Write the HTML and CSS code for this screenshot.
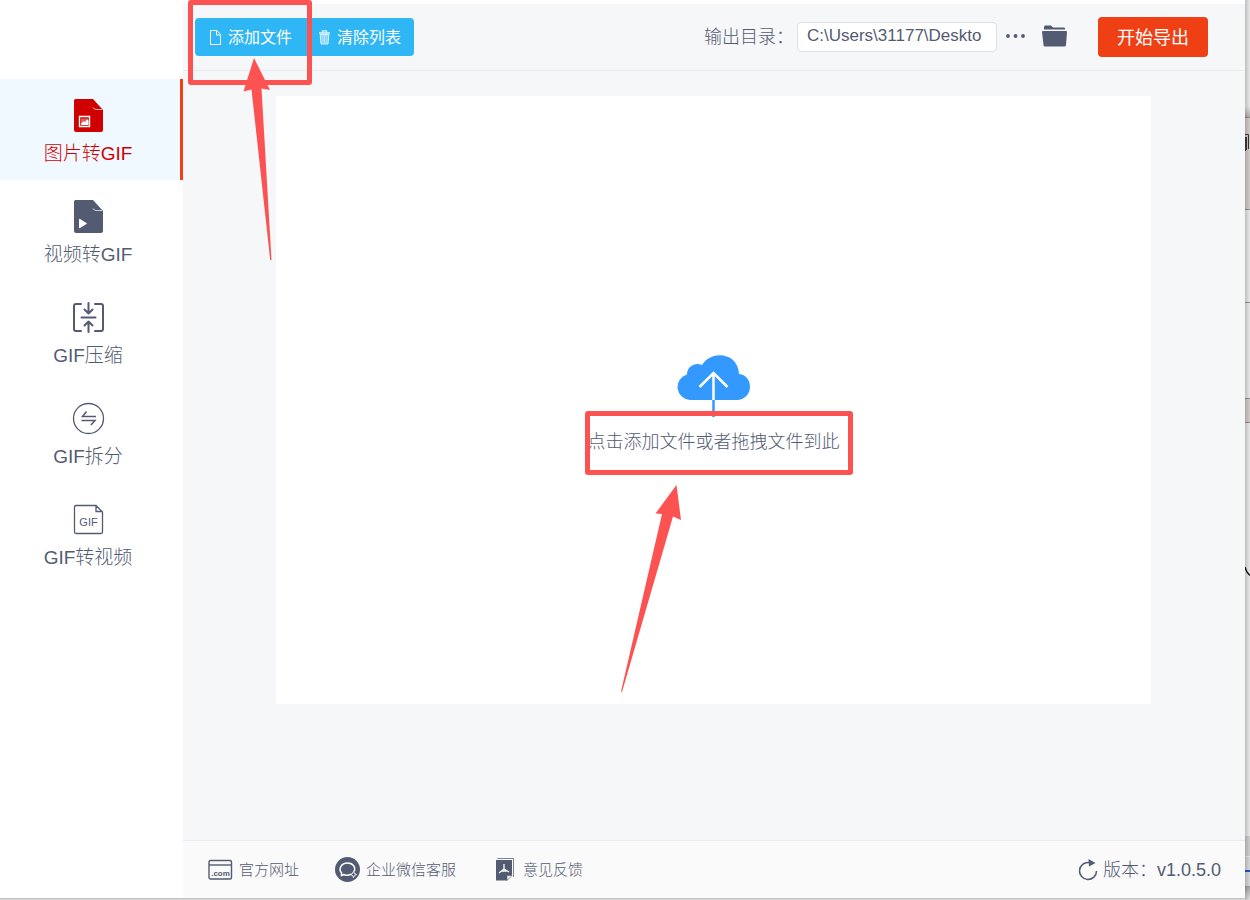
FILE: index.html
```html
<!DOCTYPE html>
<html lang="zh-CN">
<head>
<meta charset="utf-8">
<title>图片转GIF</title>
<link rel="stylesheet" href="styles.css">
</head>
<body>
<div class="app">
  <nav class="sidebar">
    <a class="nav-item active" href="#">
      <svg class="nav-icon" viewBox="0 0 34 34" width="34" height="34">
        <path fill="currentColor" d="M4.500 0H22L32 11V31a2 2 0 0 1-2 2H5a2 2 0 0 1-2-2V1.500a1.500 1.500 0 0 1 1.500-1.500z"/>
        <path d="M22 8.500q1 2 3 2H31" fill="none" stroke="#fff" stroke-opacity=".7"/>
        <path d="M8.500 17.500H18.500V27.500H8.500z" fill="none" stroke="#fff" stroke-width="1.400"/>
        <path d="M10 19.500h7v5.500h-7z" fill="#fff" fill-opacity=".35"/>
        <path d="M10 25l2.500-3 1.500 1 2-2.500 1.500 1V26H10z" fill="#fff"/>
      </svg>
      <span>图片转GIF</span>
    </a>
    <a class="nav-item" href="#">
      <svg class="nav-icon" viewBox="0 0 34 34" width="34" height="34">
        <path fill="currentColor" d="M4.500 0H22L32 11V31a2 2 0 0 1-2 2H5a2 2 0 0 1-2-2V1.500a1.500 1.500 0 0 1 1.500-1.500z"/>
        <path d="M22 8.500q1 2 3 2H31" fill="none" stroke="#fff" stroke-opacity=".7"/>
        <path d="M8 19.500q0-1 1-.6l6.500 4q.8.600 0 1.200l-6.500 4q-1 .4-1-.6z" fill="#fff"/>
      </svg>
      <span>视频转GIF</span>
    </a>
    <a class="nav-item" href="#">
      <svg class="nav-icon" viewBox="0 0 34 34" width="34" height="34" fill="none" stroke="currentColor" stroke-width="2" stroke-linecap="round" stroke-linejoin="round">
        <path d="M10 3H5a2 2 0 0 0-2 2V28a2 2 0 0 0 2 2H10M24 3H30a2 2 0 0 1 2 2V28a2 2 0 0 1-2 2H24M10.500 16.500H24.500M17.500 2V12M13.500 8.500L17.500 12.500L21.500 8.500M17.500 31V21M13.500 24.500L17.500 20.500L21.500 24.500"/>
      </svg>
      <span>GIF压缩</span>
    </a>
    <a class="nav-item" href="#">
      <svg class="nav-icon" viewBox="0 0 34 34" width="34" height="34" fill="none" stroke="currentColor">
        <circle cx="17.500" cy="16.500" r="15" stroke-width="1.300"/>
        <path stroke-width="1.500" d="M25 14.500H11.500L15.500 9.500M10.500 18.500H24L20 23"/>
      </svg>
      <span>GIF拆分</span>
    </a>
    <a class="nav-item" href="#">
      <svg class="nav-icon" viewBox="0 0 34 34" width="34" height="34">
        <path fill="none" stroke="currentColor" stroke-width="1.300" d="M25 2.500H5a1.500 1.500 0 0 0-1.500 1.500V29a1.500 1.500 0 0 0 1.500 1.500H30a1.500 1.500 0 0 0 1.500-1.500V9zM25 2.500V8.500H31.500"/>
        <text x="17.500" y="23" text-anchor="middle" font-size="11" fill="currentColor">GIF</text>
      </svg>
      <span>GIF转视频</span>
    </a>
  </nav>

  <div class="workspace">
    <header class="toolbar">
      <div class="file-actions">
        <button class="file-button" type="button">
          <svg viewBox="0 0 11 15" width="11" height="15" fill="none" stroke="currentColor"><path d="M.5.5H7L10.500 4.500V14.500H.5zM6.500.5V5H10.500"/></svg>
          <span>添加文件</span>
        </button>
        <button class="file-button" type="button">
          <svg viewBox="0 0 11 15" width="11" height="15" fill="none" stroke="currentColor"><path d="M0 3H11M3.500 2.500V.8h4V2.500" stroke-width="1.300" stroke-opacity=".85"/><path d="M1.200 4.500L2 14H9L9.800 4.500z" fill="currentColor" fill-opacity=".4" stroke-opacity=".8"/><path d="M3.800 5V13M5.500 5V13M7.200 5V13" stroke-opacity=".4"/></svg>
          <span>清除列表</span>
        </button>
        <div class="mark mark-add"></div>
        <svg class="arrow arrow-add" viewBox="0 0 30 204" width="30" height="204"><path d="M11 1L27 33L18.500 31.500L28.500 203H27.200L8.500 32.500L.5 34.500z"/></svg>
      </div>
      <div class="output">
        <label class="output-label" for="output-dir">输出目录：</label>
        <input class="output-path" id="output-dir" type="text" value="C:\Users\31177\Deskto">
        <button class="icon-button" type="button" aria-label="浏览">
          <svg viewBox="0 0 19 8" width="19" height="8" fill="currentColor"><circle cx="2" cy="3" r="1.900"/><circle cx="9.500" cy="3" r="1.900"/><circle cx="17" cy="3" r="1.900"/></svg>
        </button>
        <button class="icon-button folder" type="button" aria-label="打开目录">
          <svg viewBox="0 0 25 24" width="25" height="24" fill="currentColor"><path d="M2 4V2a1.500 1.500 0 0 1 1.500-1.500H9L11 2.500H22a1 1 0 0 1 1 1V4.500H2z"/><path d="M1 6H24a1 1 0 0 1 1 1L24 20a1.500 1.500 0 0 1-1.500 1.500H3A1.500 1.500 0 0 1 1.500 20L0 7a1 1 0 0 1 1-1z"/></svg>
        </button>
      </div>
      <button class="export-button" type="button">开始导出</button>
    </header>

    <main class="stage">
      <div class="drop-zone">
        <svg viewBox="0 0 73 62" width="73" height="62">
          <path fill="#3399ff" d="M13 45A13 13 0 0 1 10 19.500C10 10 20 7 25 10C34-5 61-3 62 19C70 20 73 26 73 32C73 39 67 45 60 45z"/>
          <path fill="none" stroke="#fff" stroke-width="2.500" d="M36.500 45V17.500M22.500 32L36.500 18L50.500 32"/>
          <path stroke="#3399ff" stroke-width="2.500" d="M36.500 45V62"/>
        </svg>
        <div class="drop-hint">
          <span>点击添加文件或者拖拽文件到此</span>
          <div class="mark mark-drop"></div>
          <svg class="arrow arrow-drop" viewBox="0 0 62 210" width="62" height="210"><path d="M56.500 1L61 36L53 32.500L2 208L1 207.500L42 30L35.500 29.500z"/></svg>
        </div>
      </div>
    </main>

    <footer class="statusbar">
      <a class="status-link" href="#">
        <svg viewBox="0 0 25 25" width="25" height="25"><rect x="1" y="3.500" width="22.500" height="18.500" rx="1.500" fill="none" stroke="currentColor" stroke-width="1.400"/><path d="M1 8H23.500" stroke="currentColor" stroke-width="1.400"/><text x="12.500" y="19" text-anchor="middle" font-size="8" font-weight="700" fill="currentColor">.com</text></svg>
        <span>官方网址</span>
      </a>
      <a class="status-link" href="#">
        <svg viewBox="0 0 25 25" width="25" height="25"><circle cx="12.500" cy="12.500" r="12.500" fill="currentColor"/><path d="M16 17.200Q12 19 8.500 17.500L6.500 18.500V16C3 11.500 6.500 6 12.500 6S21 11 19 14.500" fill="none" stroke="#fff" stroke-width="1.500"/><path d="M18.500 14.500l1 2 2 1-2 1-1 2-1-2-2-1 2-1z" fill="none" stroke="#fff" stroke-width="1"/></svg>
        <span>企业微信客服</span>
      </a>
      <a class="status-link" href="#">
        <svg viewBox="0 0 25 25" width="25" height="25"><path d="M5.500 1.500H21.500V20" fill="none" stroke="currentColor" stroke-opacity=".75"/><path d="M4 3H20V18L15 23.500H4z" fill="currentColor"/><path d="M15 23.500V18.500H20z" fill="#fafafa" stroke="currentColor" stroke-width=".6"/><path d="M12 7V12L7 16M12 12L17 15M9.500 14H14.500" fill="none" stroke="#fff" stroke-width="1.300"/></svg>
        <span>意见反馈</span>
      </a>
      <div class="version">
        <svg viewBox="0 0 20 22" width="20" height="22"><path d="M11 3.500A8.500 8.500 0 1 0 18.500 12" fill="none" stroke="currentColor" stroke-width="1.500"/><path d="M10.500 0L17.500 4L11 7.500z" fill="currentColor"/></svg>
        <span>版本：v1.0.5.0</span>
      </div>
    </footer>
  </div>
</div>

<svg class="desktop-side" viewBox="0 0 5 900" preserveAspectRatio="none" aria-hidden="true">
  <defs>
    <linearGradient id="shade"><stop offset="0" stop-color="#000" stop-opacity=".22"/><stop offset="1" stop-color="#000" stop-opacity=".04"/></linearGradient>
    <linearGradient id="fade" x2="0" y2="1"><stop offset="0" stop-color="#f4f4f4"/><stop offset="1" stop-color="#b8b8b8"/></linearGradient>
    <linearGradient id="fade-out" x2="0" y2="1"><stop offset="0" stop-color="#aaa"/><stop offset="1" stop-color="#eee"/></linearGradient>
  </defs>
  <path fill="#f4f4f4" d="M0 0H5V900H0z"/>
  <path fill="url(#fade)" d="M0 106H5V117H0z"/>
  <path fill="#dcd6d1" d="M0 117H5V209H0z"/>
  <path fill="#ddd5d1" d="M0 398H5V422H0z"/>
  <path stroke="#999" d="M0 117.500H5M0 209.500H5M0 302.500H5M0 398.500H5M0 422.500H5"/>
  <path fill="#d8d8d8" d="M0 836H5V856H0z"/>
  <path fill="#dfe3e5" d="M0 857H5V886H0z"/>
  <path fill="#1f5bc8" d="M0 870H5V872H0z"/>
  <path fill="url(#fade-out)" d="M0 886H5V900H0z"/>
  <path fill="url(#shade)" d="M0 0H5V900H0z"/>
  <path fill="none" stroke="#333" d="M0 134.500H3.500V149M.5 137V151M1.500 137V150"/>
  <path fill="none" stroke="#111" stroke-width="1.300" d="M0 567Q1 572 5 575.500"/>
</svg>
<div class="desktop-bottom"></div>
</body>
</html>
```
FILE: styles.css
```css
* {
  box-sizing: border-box;
}

body {
  margin: 0;
  min-height: 100vh;
  display: grid;
  grid-template-columns: 1fr 5px;
  grid-template-rows: 1fr 2px;
  background: #eee;
  color: #535b73;
  font-family: "Liberation Sans", "Noto Sans CJK SC", sans-serif;
  font-weight: 300;
  font-size: 18px;
}

button,
input {
  font: inherit;
  color: inherit;
}

button {
  border: 0;
  padding: 0;
  background: none;
  cursor: pointer;
}

a {
  color: inherit;
  text-decoration: none;
}

svg {
  flex: none;
}

.app {
  display: grid;
  grid-template-columns: 183px 1fr;
  background: #fff;
}

.sidebar {
  padding-top: 79px;
}

.nav-item {
  height: 101px;
  padding: 20px 4px 0 0;
  display: flex;
  flex-direction: column;
  align-items: center;
  gap: 7px;
  font-size: 19px;
  line-height: 28px;
  border-right: 3px solid transparent;
}

.nav-item.active {
  color: #d00000;
  background: #f0f9ff;
  border-right-color: #f04015;
}

.workspace {
  display: flex;
  flex-direction: column;
  border-top: 4px solid #fff;
  background: #f5f7f9;
}

.toolbar {
  height: 67px;
  padding: 0 37px 0 12px;
  display: flex;
  align-items: center;
  border-bottom: 1px solid #e9ebee;
}

.file-actions {
  position: relative;
  z-index: 1;
  height: 38px;
  display: flex;
  border-radius: 4px;
  background: #2eb6f5;
  color: #fff;
}

.file-button {
  padding: 0 13px 0 15px;
  display: flex;
  align-items: center;
  gap: 7px;
  font-size: 16px;
  font-weight: 400;
}

.file-button span {
  padding-bottom: 2px;
}

.file-button + .file-button {
  padding-left: 14px;
}

.mark {
  position: absolute;
  border: 5px solid #fd5252;
  border-radius: 3px;
  pointer-events: none;
}

.mark-add {
  left: -7px;
  top: -18px;
  width: 124px;
  height: 85px;
}

.arrow {
  position: absolute;
  fill: #fd5252;
  pointer-events: none;
}

.arrow-add {
  left: 48px;
  top: 39px;
}

.output {
  margin-left: auto;
  display: flex;
  align-items: center;
}

.output-label {
  padding-bottom: 4px;
}

.output-path {
  width: 200px;
  height: 30px;
  margin-left: 3px;
  padding: 0 0 2px 9px;
  border: 1px solid #dcdfe6;
  border-radius: 4px;
  background: #fff;
  font-size: 17px;
}

.icon-button {
  margin-left: 9px;
  display: flex;
}

.icon-button.folder {
  margin-left: 17px;
}

.export-button {
  width: 110px;
  height: 40px;
  margin-left: 31px;
  padding-bottom: 2px;
  border-radius: 4px;
  background: #ef4015;
  color: #fff;
  font-weight: 400;
}

.stage {
  flex: 1;
  display: flex;
  padding: 25px 94px 136px 93px;
}

.drop-zone {
  flex: 1;
  padding-top: 9px;
  display: flex;
  flex-direction: column;
  align-items: center;
  justify-content: center;
  gap: 12px;
  background: #fff;
}

.drop-hint {
  position: relative;
  line-height: 26px;
  white-space: nowrap;
}

.mark-drop {
  left: -3px;
  top: -18px;
  width: 268px;
  height: 64px;
}

.arrow-drop {
  left: 32px;
  top: 55px;
}

.statusbar {
  height: 58px;
  padding: 0 24px 0 25px;
  display: flex;
  align-items: center;
  gap: 36px;
  border-top: 1px solid #e9ebee;
  background: #fafafa;
  font-size: 15px;
}

.status-link {
  display: flex;
  align-items: center;
  gap: 6px;
}

.status-link span {
  padding-bottom: 2px;
}

.version {
  margin-left: auto;
  display: flex;
  align-items: center;
  gap: 5px;
  font-size: 18px;
}

.version span {
  padding-bottom: 4px;
}

.desktop-side {
  position: absolute;
  top: 0;
  right: 0;
  width: 5px;
  height: 100%;
}

.desktop-bottom {
  grid-row: 2;
  background: linear-gradient(#bbb, #ddd);
}
```
